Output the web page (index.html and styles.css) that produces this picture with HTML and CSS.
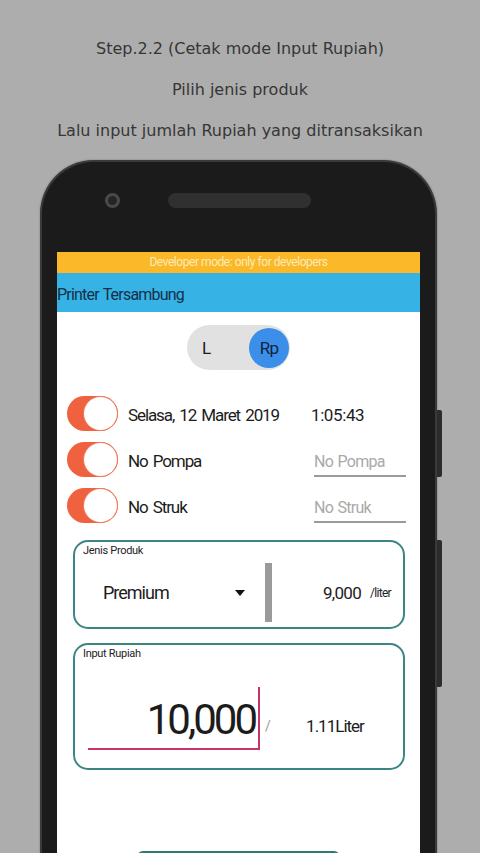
FILE: index.html
```html
<!DOCTYPE html>
<html lang="id">
<head>
  <meta charset="UTF-8">
  <title>Step 2.2 - Cetak mode Input Rupiah</title>
  <link rel="stylesheet" href="styles.css">
</head>
<body>
  <div id="intro">
    <p>Step.2.2 (Cetak mode Input Rupiah)</p>
    <p>Pilih jenis produk</p>
    <p>Lalu input jumlah Rupiah yang ditransaksikan</p>
  </div>

  <div class="phone">
    <span class="side-btn btn-power"></span>
    <span class="side-btn btn-volume"></span>

    <div class="phone-top">
      <span class="camera"></span>
      <span class="speaker"></span>
    </div>

    <div class="screen">
      <div class="devbar">Developer mode: only for developers</div>
      <div class="titlebar">Printer Tersambung</div>

      <div class="content">
        <div class="mode">
          <span class="mode-l">L</span>
          <span class="mode-rp">Rp</span>
        </div>

        <div class="row">
          <span class="switch"><span class="knob"></span></span>
          <span class="row-label">Selasa, 12 Maret 2019</span>
          <span class="row-time">1:05:43</span>
        </div>
        <div class="row">
          <span class="switch"><span class="knob"></span></span>
          <span class="row-label">No Pompa</span>
          <span class="field">No Pompa</span>
        </div>
        <div class="row">
          <span class="switch"><span class="knob"></span></span>
          <span class="row-label">No Struk</span>
          <span class="field">No Struk</span>
        </div>

        <div class="card card-produk">
          <div class="card-label">Jenis Produk</div>
          <div class="produk-row">
            <div class="select">
              <span>Premium</span>
              <span class="arrow"></span>
            </div>
            <span class="divider"></span>
            <div class="price">
              <span class="price-num">9,000</span>
              <span class="price-unit">/liter</span>
            </div>
          </div>
        </div>

        <div class="card card-rupiah">
          <div class="card-label">Input Rupiah</div>
          <div class="rupiah-row">
            <div class="amount">
              <span class="amount-num">10,000</span>
              <span class="caret"></span>
            </div>
            <span class="slash">/</span>
            <span class="liter">1.11Liter</span>
          </div>
        </div>

        <div class="print-btn"></div>
      </div>
    </div>
  </div>
</body>
</html>
```

FILE: styles.css
```css
* {
  margin: 0;
  padding: 0;
  box-sizing: border-box;
}

body {
  height: 853px;
  overflow: hidden;
  background-color: #adadad;
  font-family: "DejaVu Sans", sans-serif;
}

#intro {
  padding-top: 28px;
  text-align: center;
  color: #363636;
  font-size: 16px;
  line-height: 41px;
}

/* phone frame */
.phone {
  position: relative;
  margin: 9px 0 0 40px;
  width: 397px;
  height: 760px;
  background-color: #1b1b1b;
  border: 2px solid #3a3a3a;
  border-bottom: none;
  border-radius: 54px 54px 0 0;
  box-shadow: 0 0 2px rgba(0, 0, 0, 0.35);
  padding: 0 15px;
}

.side-btn {
  position: absolute;
  right: -7px;
  width: 5px;
  background-color: #2c2c2c;
  border-radius: 0 2px 2px 0;
}
.btn-power { top: 248px; height: 67px; }
.btn-volume { top: 378px; height: 147px; }

.phone-top {
  display: flex;
  align-items: flex-start;
  height: 90px;
  padding-top: 31px;
}

.camera {
  width: 15px;
  height: 15px;
  margin-left: 48px;
  border-radius: 50%;
  background-color: #242424;
  border: 3px solid #4a4a4a;
}

.speaker {
  width: 143px;
  height: 15px;
  margin-left: 48px;
  border-radius: 8px;
  background-color: #303030;
}

/* app screen */
.screen {
  height: 680px;
  background-color: #fff;
  font-family: Roboto, "Liberation Sans", sans-serif;
  color: #1c1c1c;
  letter-spacing: -0.7px;
}

.devbar {
  height: 21px;
  line-height: 21px;
  background-color: #fbb829;
  color: #fdebb8;
  font-size: 12px;
  letter-spacing: -0.45px;
  text-align: center;
}

.titlebar {
  height: 39px;
  padding-top: 4px;
  line-height: 35px;
  background-color: #36b2e5;
  color: #13304a;
  font-size: 16px;
  letter-spacing: -0.8px;
  word-spacing: 1px;
}

.content {
  display: flex;
  flex-direction: column;
}

.mode {
  align-self: center;
  display: flex;
  align-items: center;
  justify-content: space-between;
  width: 103px;
  height: 45px;
  margin-top: 13px;
  padding: 0 1px 0 15px;
  background-color: #e1e1e1;
  border-radius: 23px;
  font-size: 17px;
  color: #1c1c1c;
}

.mode-rp {
  width: 40px;
  height: 40px;
  line-height: 40px;
  text-align: center;
  border-radius: 50%;
  background-color: #3b8fe8;
  color: #10243d;
}

.row {
  display: grid;
  grid-template-columns: 51px 1fr 92px;
  column-gap: 10px;
  align-items: center;
  height: 46px;
  padding: 0 14px 0 10px;
  font-size: 17px;
}
.mode + .row {
  margin-top: 20px;
}

.row-label {
  padding-top: 3px;
  letter-spacing: -1.1px;
  word-spacing: 2px;
}

.switch {
  position: relative;
  display: block;
  width: 51px;
  height: 35px;
  border-radius: 18px;
  background-color: #f0623f;
}

.knob {
  position: absolute;
  top: 1px;
  right: 1px;
  width: 33px;
  height: 33px;
  border-radius: 50%;
  background-color: #fff;
  box-shadow: 0 0 0 1px #f27a5c;
}

.row-time {
  padding-top: 3px;
  margin-left: -3px;
  letter-spacing: -0.4px;
}

.field {
  height: 36px;
  padding-top: 12px;
  border-bottom: 2px solid #9b9b9b;
  color: #a9a9a9;
  font-size: 16px;
  line-height: 18px;
  word-spacing: 1px;
}

.card {
  margin: 12px 15px 0 16px;
  border: 2px solid #3b8585;
  border-radius: 15px;
  padding: 2px 12px 0 8px;
}

.card-label {
  font-size: 11px;
  line-height: 14px;
  letter-spacing: -0.3px;
  color: #1c1c1c;
}

.card-produk {
  height: 89px;
}

.produk-row {
  display: flex;
  align-items: center;
  height: 59px;
  margin-top: 5px;
}

.select {
  display: flex;
  align-items: center;
  justify-content: space-between;
  width: 182px;
  padding: 0 20px;
  font-size: 18px;
  letter-spacing: -1px;
}

.arrow {
  width: 0;
  height: 0;
  border-left: 5px solid transparent;
  border-right: 5px solid transparent;
  border-top: 6px solid #111;
}

.divider {
  width: 7px;
  height: 59px;
  background-color: #9a9a9a;
}

.price {
  flex: 1;
  display: flex;
  justify-content: flex-end;
  align-items: center;
  gap: 9px;
}

.price-num {
  font-size: 17px;
}

.price-unit {
  font-size: 12px;
}

.card-rupiah {
  height: 127px;
  margin-top: 14px;
}

.rupiah-row {
  display: flex;
  align-items: center;
  margin-top: 28px;
}

.amount {
  display: flex;
  justify-content: flex-end;
  align-items: flex-end;
  width: 172px;
  height: 61px;
  margin-left: 5px;
  border-bottom: 2px solid #c8336a;
}

.amount-num {
  font-size: 42px;
  line-height: 50px;
  letter-spacing: -3px;
  padding-bottom: 3px;
  margin-right: 3px;
}

.caret {
  width: 2px;
  height: 61px;
  background-color: #c8336a;
}

.slash {
  margin: 12px 0 0 5px;
  color: #9b9b9b;
  font-size: 14px;
}

.liter {
  margin: 12px 0 0 36px;
  font-size: 17px;
  letter-spacing: -1px;
}

.print-btn {
  align-self: center;
  width: 203px;
  height: 40px;
  margin-top: 81px;
  border-radius: 6px;
  background-color: #2a7a7a;
}
```
